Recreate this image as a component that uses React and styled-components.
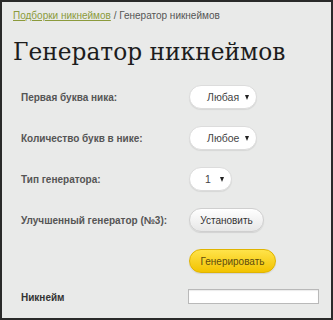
import React from 'react'
import styled, { createGlobalStyle } from 'styled-components'

const GlobalStyle = createGlobalStyle`
body {
    margin: 0;
    background: #e9eae9;
    font-family: "Liberation Sans", Arial, sans-serif;
}
`

const Frame = styled.div`
box-sizing: border-box;
width: 333px;
height: 320px;
border: 2px solid #2a2a2a;
background: #e9eae9;
padding: 7px 0 0 11px;
overflow: hidden;
`

const Crumbs = styled.div`
font-size: 10px;
line-height: 14px;
color: #555;
height: 14px;
`

const CrumbLink = styled.a`
color: #8b9a3c;
text-decoration: underline;
`

const Title = styled.h1`
margin: 15px 0 0 0;
font-family: "DejaVu Serif", serif;
font-weight: normal;
font-size: 23.3px;
line-height: 28px;
color: #1d1d1d;
`

const Form = styled.div`
display: grid;
grid-template-columns: 168px auto;
grid-auto-rows: 24px;
row-gap: 17px;
margin: 19px 0 0 8px;
align-items: center;
`

const Label = styled.div`
font-size: 10px;
font-weight: bold;
color: ${props => (props.dark ? '#333' : '#555')};
align-self: ${props => (props.top ? 'start' : 'center')};
line-height: ${props => (props.top ? '15px' : 'normal')};
`

const Select = styled.div`
box-sizing: border-box;
display: flex;
align-items: center;
justify-content: space-between;
width: ${props => props.width}px;
height: 24px;
padding: 0 7px 0 ${props => props.pad}px;
border-radius: 12px;
background: #fff;
border: 1px solid #dcdcdc;
box-shadow: 0 1px 1px rgba(0, 0, 0, 0.08);
font-size: 10.5px;
color: #444;
`

const Arrow = styled.span`
width: 0;
height: 0;
border-left: 2.5px solid transparent;
border-right: 2.5px solid transparent;
border-top: 5px solid #222;
`

const Button = styled.div`
box-sizing: border-box;
display: inline-flex;
align-items: center;
justify-content: center;
width: ${props => props.width}px;
height: 24px;
border-radius: 12px;
font-size: 10px;
color: ${props => (props.yellow ? '#5e4c0c' : '#333')};
background: ${props => (props.yellow
    ? 'linear-gradient(#ffe34a, #f2c300)'
    : 'linear-gradient(#ffffff, #e7e7e7)')};
border: 1px solid ${props => (props.yellow ? '#e0b400' : '#cfcfcf')};
box-shadow: 0 1px 1px rgba(0, 0, 0, 0.1);
`

const Cell = styled.div`
display: flex;
align-items: center;
align-self: ${props => (props.top ? 'start' : 'center')};
`

const TextInput = styled.div`
box-sizing: border-box;
width: 131px;
height: 15px;
margin: -1px 0 0 -1px;
background: #fff;
border: 1px solid #b9b9b9;
box-shadow: inset 0 1px 1px rgba(0, 0, 0, 0.08);
`

export default function App() {
    return (
        <Frame>
            <GlobalStyle />
            <Crumbs>
                <CrumbLink>Подборки никнеймов</CrumbLink> / Генератор никнеймов
            </Crumbs>
            <Title>Генератор никнеймов</Title>
            <Form>
                <Label>Первая буква ника:</Label>
                <Cell>
                    <Select width={68} pad={17}>Любая<Arrow /></Select>
                </Cell>
                <Label>Количество букв в нике:</Label>
                <Cell>
                    <Select width={68} pad={17}>Любое<Arrow /></Select>
                </Cell>
                <Label>Тип генератора:</Label>
                <Cell>
                    <Select width={43} pad={15}>1<Arrow /></Select>
                </Cell>
                <Label>Улучшенный генератор (№3):</Label>
                <Cell>
                    <Button width={75}>Установить</Button>
                </Cell>
                <div />
                <Cell>
                    <Button yellow width={87}>Генерировать</Button>
                </Cell>
                <Label dark top>Никнейм</Label>
                <Cell top>
                    <TextInput />
                </Cell>
            </Form>
        </Frame>
    )
}
